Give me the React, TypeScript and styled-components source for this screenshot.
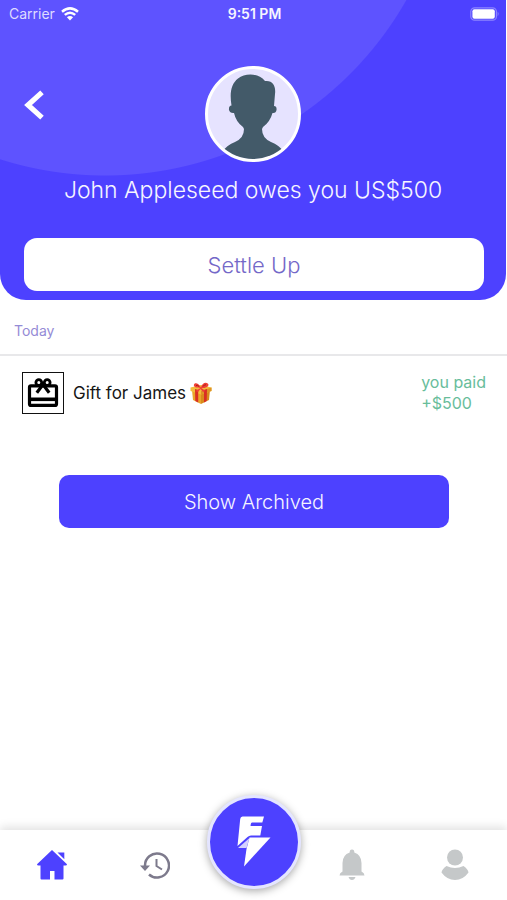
import React from "react";
import styled, { createGlobalStyle } from "styled-components";

const brand = "#4d41ff";

const GlobalStyle = createGlobalStyle`
  * { box-sizing: border-box; }
  body { margin: 0; background: #fff; font-family: Inter, "Open Sans", sans-serif; }
  button, a { font: inherit; color: inherit; text-decoration: none; }
  button { border: 0; padding: 0; background: none; cursor: pointer; }
  svg { display: block; }
`;

const Screen = styled.div`
  display: flex;
  flex-direction: column;
  min-height: 100vh;
`;

const Header = styled.header`
  display: flex;
  flex-direction: column;
  margin-right: 1px;
  padding-bottom: 9px;
  color: #f6f5ff;
  border-radius: 0 0 26px 26px;
  background: radial-gradient(circle at 105px -171px, #5e53ff 346px, ${brand} 347px);
`;

const StatusBar = styled.div`
  display: grid;
  grid-template-columns: 1fr auto 1fr;
  align-items: center;
  height: 28px;
  padding: 0 6px 0 9px;
  font-size: 14px;
  line-height: 20px;
`;

const Carrier = styled.span`
  display: flex;
  align-items: center;
  gap: 6px;
  color: #dedbff;
`;

const Clock = styled.time`
  font-size: 14px;
  font-weight: 600;
`;

const BatterySlot = styled.span`
  justify-self: end;
`;

const ProfileRow = styled.div`
  display: grid;
  grid-template-columns: 1fr auto 1fr;
  align-items: center;
  padding: 38px 24px 0;
`;

const BackButton = styled.button`
  justify-self: start;
  margin-bottom: 18px;
`;

const Avatar = styled.div`
  width: 96px;
  height: 96px;
  border: 3px solid #fff;
  border-radius: 50%;
  overflow: hidden;
  background: #e6e3ff;
`;

const Balance = styled.h1`
  margin: 12px 0 0;
  text-align: center;
  font-size: 23px;
  font-weight: 300;
  line-height: 32px;
`;

const ActionButton = styled.button<{ $tone: "light" | "brand" }>`
  height: 53px;
  border-radius: ${(p) => (p.$tone === "light" ? 13 : 10)}px;
  background: ${(p) => (p.$tone === "light" ? "#fff" : brand)};
  color: ${(p) => (p.$tone === "light" ? "#7468c8" : "#f6f5ff")};
  font-size: ${(p) => (p.$tone === "light" ? 22 : 20)}px;
  font-weight: 300;
  line-height: 28px;
  margin: ${(p) => (p.$tone === "light" ? "32px 22px 0 24px" : "47px 58px 0 59px")};
`;

const Main = styled.main`
  display: flex;
  flex: 1;
  flex-direction: column;
`;

const DayHeading = styled.h2`
  margin: 0;
  padding: 21px 14px 13px;
  border-bottom: 2px solid #e8e8ea;
  color: #958bd6;
  font-size: 14px;
  font-weight: 400;
  line-height: 20px;
`;

const ExpenseRow = styled.div`
  display: flex;
  align-items: center;
  padding: 16px 21px 14px 22px;
`;

const Category = styled.span`
  display: grid;
  place-items: center;
  width: 42px;
  height: 42px;
  border: 1px solid #111;
`;

const ExpenseTitle = styled.span`
  display: flex;
  flex: 1;
  align-items: center;
  gap: 4px;
  padding-left: 9px;
  color: #161616;
  font-size: 17px;
  line-height: 24px;
`;

const Amount = styled.span`
  color: #68bd9b;
  font-size: 16px;
  line-height: 21px;
`;

const TabBar = styled.nav`
  display: grid;
  grid-template-columns: 1fr 1fr 94px 1fr 1fr;
  align-items: center;
  justify-items: center;
  height: 70px;
  background: #fff;
  box-shadow: 0 -3px 9px rgba(0, 0, 0, 0.12);
`;

const Tab = styled.a<{ $color: string }>`
  color: ${(p) => p.$color};
`;

const QuickAction = styled.button`
  display: grid;
  place-items: center;
  width: 94px;
  height: 94px;
  margin-top: -46px;
  border: 3px solid #e4e5ff;
  border-radius: 50%;
  background: ${brand};
  box-shadow: 0 2px 8px rgba(0, 0, 0, 0.35);
`;

const WifiIcon = () => (
  <svg width="18" height="14" viewBox="0 0 18 14" fill="none" stroke="#fff" strokeWidth="2.5" aria-hidden="true">
    <path d="M1 4.8Q9-2 17 4.8M3.8 7.9Q9 3.5 14.2 7.9" />
    <path d="M9 13.5 5.9 10.3Q9 7.7 12.1 10.3Z" fill="#fff" stroke="none" />
  </svg>
);

const BatteryIcon = () => (
  <svg width="30" height="14" viewBox="0 0 30 14" aria-label="Battery full">
    <rect x=".8" y=".8" width="25.6" height="12.4" rx="3.8" fill="none" stroke="#8d85ff" strokeWidth="1.2" />
    <rect x="2.4" y="2.3" width="22.4" height="9.4" rx="2" fill="#fff" />
    <path d="M27.6 4.6q2 2.3 0 4.8Z" fill="#8d85ff" />
  </svg>
);

const ChevronIcon = () => (
  <svg width="20" height="30" viewBox="0 0 20 30" fill="none" stroke="#fff" strokeWidth="5.2" aria-hidden="true">
    <path d="M18 2.4 4 15l14 12.600" />
  </svg>
);

const Silhouette = () => (
  <svg width="90" height="90" viewBox="0 0 90 90" fill="#435a69" aria-hidden="true">
    <path d="M23.500 36.500C21.500 24 23 15 30 9.500C37 4 50 3.500 57 12C65 11 68 17 67 25L66 37Q69 37 68.500 41Q68 44.500 64.500 44Q62 53 55 58L54 60Q54 69 63 73Q71 76 76 83V90H14V83Q19 76 27 73Q36 69 36 60L35 58Q28 53 26 44Q22 44.500 21 41Q20.500 37 23.500 36.500Z" />
  </svg>
);

const GiftCardIcon = () => (
  <svg width="32" height="32" viewBox="0 0 32 32" fill="none" stroke="#000" strokeWidth="3.200" strokeLinejoin="round" aria-hidden="true">
    <rect x="2.500" y="8.800" width="27" height="19.600" rx="1.500" />
    <path d="M2.500 22.300h27" strokeWidth="3.600" />
    <circle cx="11.800" cy="5.600" r="2.900" strokeWidth="2.800" />
    <circle cx="20.200" cy="5.600" r="2.900" strokeWidth="2.800" />
    <path d="M9.800 15.800 16 7.500l6.200 8.300" />
  </svg>
);

const PresentIcon = () => (
  <svg width="22" height="22" viewBox="0 0 22 22" role="img" aria-label="wrapped gift">
    <path d="M2 8 11 11v11L3 18Z" fill="#e9a52a" />
    <path d="M20 8 11 11v11l8-4Z" fill="#d98a1c" />
    <path d="M.5 5.500 11 3l10.500 2.500V9L11 12.500.500 9Z" fill="#f2bc3c" />
    <path d="M11 9 21.500 5.500V9L11 12.500Z" fill="#dd9424" />
    <path d="m5 7 3.200 1v12.600L5.300 19ZM14 8l3-1-.3 12-2.700 1.600Z" fill="#d92f24" />
    <path d="M10.500 6C7 6 3 5.500 4 2.500S9.500 2 11 5.500C12 1 16-.5 18 1.800S15 6.500 11.500 6l4 3-2.500 1-2.500-3-2.500 3L5.500 9Z" fill="#ef4036" />
    <path d="M6 3.500q2-.8 3 1M13 4.500q1-2 3-1.700" stroke="#a91c1b" fill="none" />
  </svg>
);

const BoltLogo = () => (
  <svg width="34" height="52" viewBox="0 0 34 52" aria-hidden="true">
    <path d="M5.500 .5H27L25.300 6.500H15Q14 6.500 13.800 8L13.500 10H25L23.300 19.500H14Q12 19.500 10.500 21L.5 30 3.200 3Q3.500.500 5.500.500Z" fill="#fff" />
    <path d="M12.500 21.500H33.500L7 50.500 9.500 33Z" fill="#fff" />
    <path d="M1 32 12.500 22 9.500 32Z" fill="#d5d2ff" />
  </svg>
);

const HomeIcon = () => (
  <svg width="32" height="30" viewBox="0 0 32 30" fill="currentColor" aria-hidden="true">
    <path d="M16 0 31 14.200Q31 15.500 29.500 15.500H27.500V28.500Q27.500 29.500 26.500 29.500H18.500V21H14V29.500H5.500Q4.500 29.500 4.500 28.500V15.500H2.500Q1 15.500 1 14.200Z" />
    <path d="M21.500 2.500H28.300V9.200Z" />
  </svg>
);

const HistoryIcon = () => (
  <svg width="30" height="28" viewBox="0 0 30 28" fill="none" stroke="currentColor" strokeWidth="2.500" aria-hidden="true">
    <path d="M5 15A12 12 0 1 1 9 23.500" />
    <path d="M0 14.500H10L5 20Z" fill="currentColor" stroke="none" />
    <path d="M16.500 8V15L22 18.500" strokeWidth="2" />
  </svg>
);

const BellIcon = () => (
  <svg width="26" height="32" viewBox="0 0 26 32" fill="currentColor" aria-hidden="true">
    <path d="M13 .5Q15.500.500 15.300 3.500Q22.500 6 22.500 14V22.500Q25.500 24 25.500 26.500H.500Q.500 24 3.500 22.500V14Q3.500 6 10.700 3.500Q10.500.500 13 .500ZM9.500 28H16.500Q15.500 31 13 31T9.500 28Z" />
  </svg>
);

const PersonIcon = () => (
  <svg width="28" height="32" viewBox="0 0 28 32" fill="currentColor" aria-hidden="true">
    <circle cx="14" cy="8.500" r="8" />
    <path d="M5.500 17Q14 21 22.500 17Q27 20 27.500 23.500Q22 31 14 31T.500 23.500Q1 20 5.500 17Z" />
  </svg>
);

export default function App() {
  return (
    <>
      <GlobalStyle />
      <Screen>
        <Header>
          <StatusBar>
            <Carrier>Carrier <WifiIcon /></Carrier>
            <Clock>9:51 PM</Clock>
            <BatterySlot><BatteryIcon /></BatterySlot>
          </StatusBar>
          <ProfileRow>
            <BackButton aria-label="Back"><ChevronIcon /></BackButton>
            <Avatar><Silhouette /></Avatar>
          </ProfileRow>
          <Balance>John Appleseed owes you US$500</Balance>
          <ActionButton $tone="light">Settle Up</ActionButton>
        </Header>
        <Main>
          <DayHeading>Today</DayHeading>
          <ExpenseRow>
            <Category><GiftCardIcon /></Category>
            <ExpenseTitle>Gift for James <PresentIcon /></ExpenseTitle>
            <Amount>you paid<br />+$500</Amount>
          </ExpenseRow>
          <ActionButton $tone="brand">Show Archived</ActionButton>
        </Main>
        <TabBar>
          <Tab href="#home" aria-label="Home" $color={brand}><HomeIcon /></Tab>
          <Tab href="#history" aria-label="History" $color="#7d7a8c"><HistoryIcon /></Tab>
          <QuickAction aria-label="Quick action"><BoltLogo /></QuickAction>
          <Tab href="#alerts" aria-label="Notifications" $color="#c5c8c9"><BellIcon /></Tab>
          <Tab href="#profile" aria-label="Profile" $color="#c5c8c9"><PersonIcon /></Tab>
        </TabBar>
      </Screen>
    </>
  );
}
